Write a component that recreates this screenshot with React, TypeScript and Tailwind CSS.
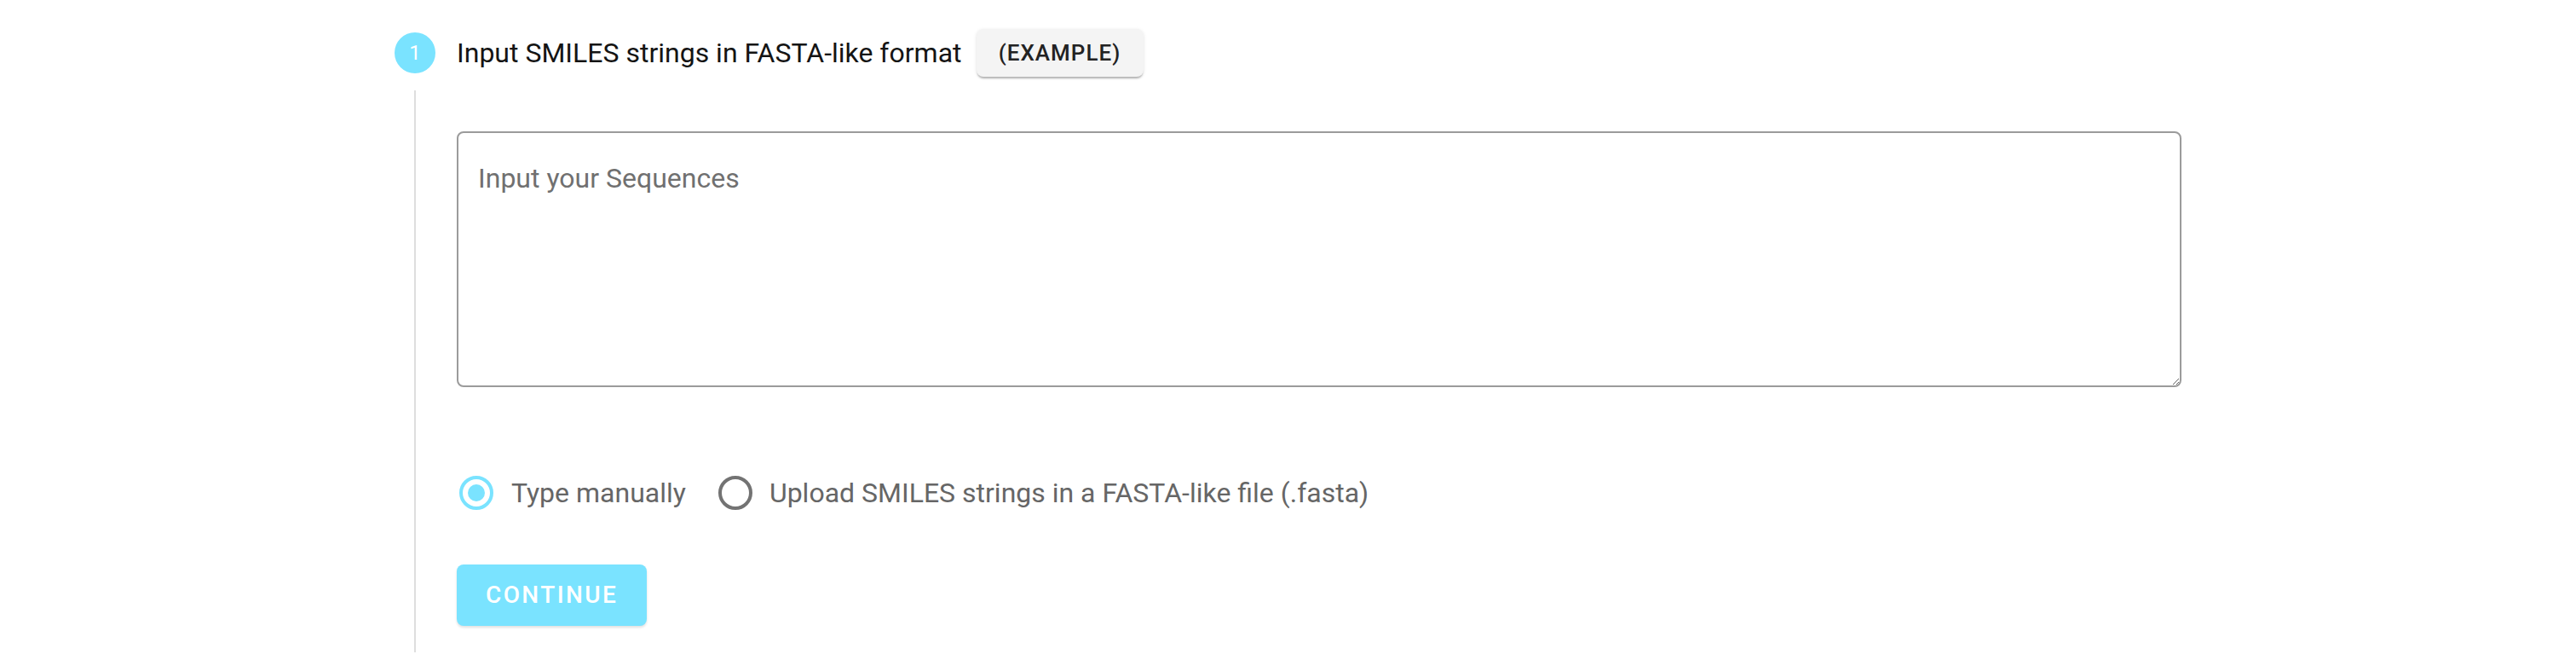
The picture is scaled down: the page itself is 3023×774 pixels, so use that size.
import React, { useState } from 'react';

const Radio: React.FC<{ checked: boolean }> = ({ checked }) => (
  <span
    className={`flex h-10 w-10 items-center justify-center rounded-full border-4 ${
      checked ? 'border-[#7ae3ff]' : 'border-[#737373]'
    }`}
  >
    {checked && <span className="h-5 w-5 rounded-full bg-[#7ae3ff]" />}
  </span>
);

export default function App() {
  const [mode, setMode] = useState<'manual' | 'upload'>('manual');

  return (
    <div className="min-h-[774px] bg-white font-['Roboto',sans-serif]">
      <div className="pl-[463px] pt-[34px]">
        {/* Step header */}
        <div className="flex h-[56px] items-center">
          <div className="flex h-12 w-12 items-center justify-center rounded-full bg-[#7ae3ff] text-[24px] text-white">
            1
          </div>
          <span className="ml-[25px] text-[32px] text-[#141414]">Input SMILES strings in FASTA-like format</span>
          <button className="ml-[17px] h-[56px] w-[196px] rounded-lg bg-[#f4f4f4] text-[26px] font-medium tracking-[1px] text-[#222] shadow-[0_3px_2px_-1px_rgba(0,0,0,0.25),0_1px_4px_rgba(0,0,0,0.1)]">
            (EXAMPLE)
          </button>
        </div>

        {/* Step content */}
        <div className="ml-[23px] mt-[16px] border-l-2 border-[#dedede] pb-[31px] pl-[48px] pt-[48px]">
          <textarea
            placeholder="Input your Sequences"
            className="block h-[300px] w-[2024px] rounded-lg border-2 border-[#9b9b9b] px-[23px] pt-[30px] text-[32px] leading-[1.4375] text-[#222] outline-none placeholder:text-[#707070]"
          />

          <div className="mt-[104px] flex h-10 items-center pl-[3px] text-[32px] text-[#666]">
            <label className="flex cursor-pointer items-center" onClick={() => setMode('manual')}>
              <Radio checked={mode === 'manual'} />
              <span className="ml-[21px]">Type manually</span>
            </label>
            <label className="ml-[38px] flex cursor-pointer items-center" onClick={() => setMode('upload')}>
              <Radio checked={mode === 'upload'} />
              <span className="ml-[20px]">Upload SMILES strings in a FASTA-like file (.fasta)</span>
            </label>
          </div>

          <button className="mt-[64px] block h-[72px] rounded-lg bg-[#7ae3ff] px-[34px] text-[28px] font-medium tracking-[2.4px] text-white shadow-[0_2px_3px_rgba(0,0,0,0.12)]">
            CONTINUE
          </button>
        </div>
      </div>
    </div>
  );
}
